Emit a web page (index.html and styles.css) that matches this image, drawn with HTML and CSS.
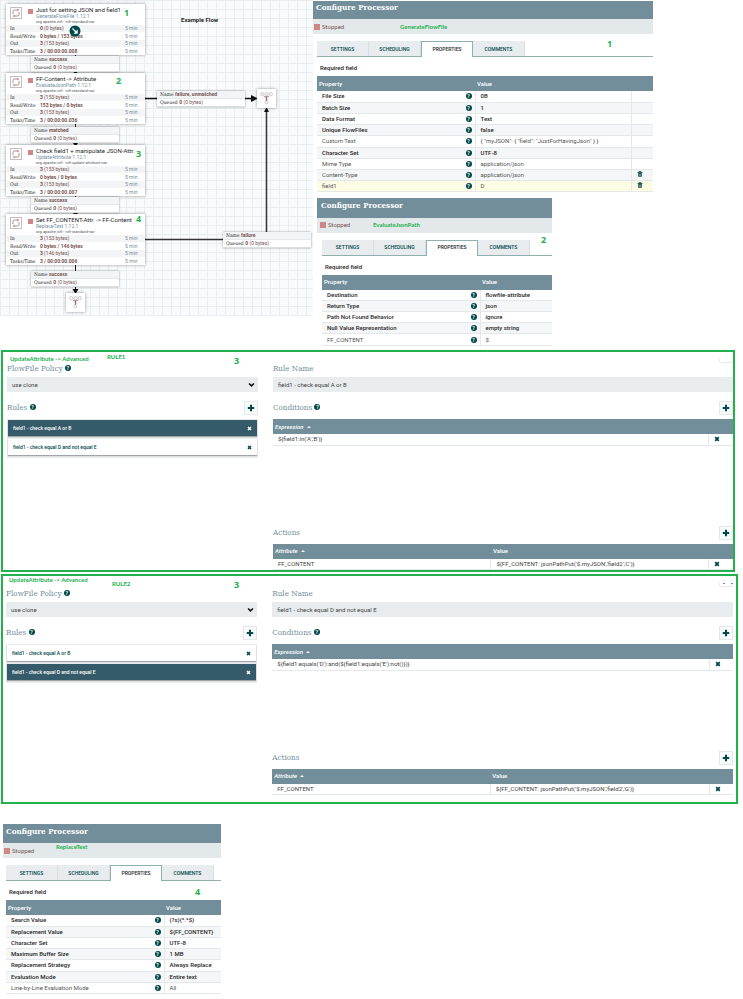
FILE: index.html
```html
<!DOCTYPE html>
<html lang="en">
<head>
  <meta charset="UTF-8">
  <meta name="viewport" content="width=device-width, initial-scale=1.0">
  <title>Example Flow</title>
  <link rel="stylesheet" href="styles.css">
</head>
<body>
  <!-- shared icons -->
  <svg class="defs" width="0" height="0" aria-hidden="true">
    <symbol id="i-plus" viewBox="0 0 10 10"><path d="M5 1v8M1 5h8" stroke="#004849" stroke-width="2.6"/></symbol>
    <symbol id="i-x" viewBox="0 0 10 10"><path d="M2 2l6 6M8 2l-6 6" stroke="currentColor" stroke-width="3"/></symbol>
    <symbol id="i-trash" viewBox="0 0 10 10"><path d="M1 2.5h8M3.5 2V1h3v1" fill="none" stroke="#004849" stroke-width="1.4"/><path d="M2 3h6v6.500H2z" fill="#004849"/><path d="M4 4.500v3.500M6 4.500v3.500" stroke="#fff" stroke-width=".8"/></symbol>
    <symbol id="i-down" viewBox="0 0 10 10"><path d="M1.500 3.500L5 7l3.500-3.500" fill="none" stroke="#111" stroke-width="2.200"/></symbol>
    <symbol id="i-proc" viewBox="0 0 12 12"><rect x=".5" y=".5" width="11" height="11" fill="#fff" stroke="#c9bcbc"/><path d="M3 7V4.500Q3 3 4.500 3H8M9 5v2.500Q9 9 7.500 9H4" fill="none" stroke="#ad8d8d" stroke-width="1"/><path d="M7.500 1.500L9.300 3 7.500 4.500zM4.500 7.500L2.700 9l1.800 1.500z" fill="#ad8d8d"/></symbol>
    <symbol id="i-funnel" viewBox="0 0 20 20"><g fill="none" stroke="#c2b2b2" stroke-width=".8"><circle cx="5.500" cy="5.500" r="1.700"/><circle cx="10" cy="5.500" r="1.700"/><circle cx="14.500" cy="5.500" r="1.700"/><circle cx="10" cy="14" r="1.500"/></g><path d="M7.500 8.200h5M10 8v4.500M9 10.500h2" stroke="#a07272" stroke-width="1.200"/></symbol>
  </svg>

  <div class="top">
    <section class="canvas">
      <svg class="wires" viewBox="0 0 313 316" aria-hidden="true">
        <g stroke="#111" fill="none">
          <path d="M75.500 54v20M75.500 124v22M75.500 196v20M75.500 265v28"/>
          <path d="M145 98.500h107" stroke-width="1.500"/>
          <path d="M145 239.500h121.500V112" stroke="#333" stroke-width="1.500"/>
        </g>
        <path d="M73 71.500h5l-2.500 3zM73 143h5l-2.500 3.500zM73 213h5l-2.500 3zM72.500 289h6l-3 5zM251 95l7 3.500-7 3.500zM264 112l2.500-5 2.500 5z" fill="#111"/>
      </svg>
      <b class="flow-title">Example Flow</b>

      <article class="proc p1">
        <header><svg class="proc-icon"><use href="#i-proc"/></svg><i class="stop"></i>
          <div><h3>Just for setting JSON and field1</h3><p class="type">GenerateFlowFile 1.12.1</p><p>org.apache.nifi - nifi-standard-nar</p></div></header>
        <table>
          <tr><th>In</th><td><b>0</b> (0 bytes)</td><td>5 min</td></tr>
          <tr><th>Read/Write</th><td><b>0 bytes / 153 bytes</b></td><td>5 min</td></tr>
          <tr><th>Out</th><td><b>3</b> (153 bytes)</td><td>5 min</td></tr>
          <tr><th>Tasks/Time</th><td><b>3 / 00:00:00.008</b></td><td>5 min</td></tr>
        </table>
        <svg class="drag" viewBox="0 0 12 12"><circle cx="6" cy="6" r="5.500" fill="#004849"/><path d="M3.500 3.500l4 4" stroke="#fff" stroke-width="1.200"/><path d="M8.700 4.500v4.200H4.500z" fill="#fff"/></svg>
      </article>
      <article class="proc p2">
        <header><svg class="proc-icon"><use href="#i-proc"/></svg><i class="stop"></i>
          <div><h3>FF-Content -&gt; Attribute</h3><p class="type">EvaluateJsonPath 1.12.1</p><p>org.apache.nifi - nifi-standard-nar</p></div></header>
        <table>
          <tr><th>In</th><td><b>3</b> (153 bytes)</td><td>5 min</td></tr>
          <tr><th>Read/Write</th><td><b>153 bytes / 0 bytes</b></td><td>5 min</td></tr>
          <tr><th>Out</th><td><b>3</b> (153 bytes)</td><td>5 min</td></tr>
          <tr><th>Tasks/Time</th><td><b>3 / 00:00:00.036</b></td><td>5 min</td></tr>
        </table>
      </article>
      <article class="proc p3">
        <header><svg class="proc-icon"><use href="#i-proc"/></svg><i class="stop"></i>
          <div><h3>Check field1 + manipulate JSON-Attr.</h3><p class="type">UpdateAttribute 1.12.1</p><p>org.apache.nifi - nifi-update-attribute-nar</p></div></header>
        <table>
          <tr><th>In</th><td><b>3</b> (153 bytes)</td><td>5 min</td></tr>
          <tr><th>Read/Write</th><td><b>0 bytes / 0 bytes</b></td><td>5 min</td></tr>
          <tr><th>Out</th><td><b>3</b> (153 bytes)</td><td>5 min</td></tr>
          <tr><th>Tasks/Time</th><td><b>3 / 00:00:00.007</b></td><td>5 min</td></tr>
        </table>
      </article>
      <article class="proc p4">
        <header><svg class="proc-icon"><use href="#i-proc"/></svg><i class="stop"></i>
          <div><h3>Set FF_CONTENT-Attr. -&gt; FF-Content</h3><p class="type">ReplaceText 1.12.1</p><p>org.apache.nifi - nifi-standard-nar</p></div></header>
        <table>
          <tr><th>In</th><td><b>3</b> (153 bytes)</td><td>5 min</td></tr>
          <tr><th>Read/Write</th><td><b>0 bytes / 146 bytes</b></td><td>5 min</td></tr>
          <tr><th>Out</th><td><b>3</b> (146 bytes)</td><td>5 min</td></tr>
          <tr><th>Tasks/Time</th><td><b>3 / 00:00:00.006</b></td><td>5 min</td></tr>
        </table>
      </article>

      <div class="conn c1"><p>Name <b>success</b></p><p>Queued <b>0</b> <em>(0 bytes)</em></p></div>
      <div class="conn c2"><p>Name <b>matched</b></p><p>Queued <b>0</b> <em>(0 bytes)</em></p></div>
      <div class="conn c3"><p>Name <b>success</b></p><p>Queued <b>0</b> <em>(0 bytes)</em></p></div>
      <div class="conn c4"><p>Name <b>success</b></p><p>Queued <b>0</b> <em>(0 bytes)</em></p></div>
      <div class="conn c5"><p>Name <b>failure, unmatched</b></p><p>Queued <b>0</b> <em>(0 bytes)</em></p></div>
      <div class="conn c6"><p>Name <b>failure</b></p><p>Queued <b>0</b> <em>(0 bytes)</em></p></div>
      <svg class="funnel f1"><use href="#i-funnel"/></svg>
      <svg class="funnel f2"><use href="#i-funnel"/></svg>

      <span class="num n1">1</span>
      <span class="num n2">2</span>
      <span class="num n3">3</span>
      <span class="num n4">4</span>
    </section>

    <div class="dialogs">
      <section class="dialog generate">
        <h2>Configure Processor</h2>
        <div class="status"><i class="stop"></i>Stopped<span class="note">GenerateFlowFile</span></div>
        <div class="dialog-body">
          <nav class="tabs"><button>SETTINGS</button><button>SCHEDULING</button><button class="active">PROPERTIES</button><button>COMMENTS</button></nav>
          <span class="num">1</span>
          <p class="required">Required field</p>
          <table class="props">
            <colgroup><col class="name"><col><col class="tools"></colgroup>
            <thead><tr><th>Property</th><th>Value</th><th></th></tr></thead>
            <tbody>
              <tr class="req"><td>File Size<span class="help">?</span></td><td>0B</td><td></td></tr>
              <tr class="req"><td>Batch Size<span class="help">?</span></td><td>1</td><td></td></tr>
              <tr class="req"><td>Data Format<span class="help">?</span></td><td>Text</td><td></td></tr>
              <tr class="req"><td>Unique FlowFiles<span class="help">?</span></td><td>false</td><td></td></tr>
              <tr><td>Custom Text<span class="help">?</span></td><td>{ "myJSON": { "field": "JustForHavingJson" } }</td><td></td></tr>
              <tr class="req"><td>Character Set<span class="help">?</span></td><td>UTF-8</td><td></td></tr>
              <tr><td>Mime Type<span class="help">?</span></td><td>application/json</td><td></td></tr>
              <tr><td>Content-Type<span class="help">?</span></td><td>application/json</td><td><button class="icon" aria-label="Delete"><svg><use href="#i-trash"/></svg></button></td></tr>
              <tr class="selected"><td>field1<span class="help">?</span></td><td>D</td><td><button class="icon" aria-label="Delete"><svg><use href="#i-trash"/></svg></button></td></tr>
            </tbody>
          </table>
        </div>
      </section>

      <section class="dialog evaluate">
        <h2>Configure Processor</h2>
        <div class="status"><i class="stop"></i>Stopped<span class="note">EvaluateJsonPath</span></div>
        <div class="dialog-body">
          <nav class="tabs"><button>SETTINGS</button><button>SCHEDULING</button><button class="active">PROPERTIES</button><button>COMMENTS</button></nav>
          <span class="num">2</span>
          <p class="required">Required field</p>
          <table class="props">
            <colgroup><col class="name"><col></colgroup>
            <thead><tr><th>Property</th><th>Value</th></tr></thead>
            <tbody>
              <tr class="req"><td>Destination<span class="help">?</span></td><td>flowfile-attribute</td></tr>
              <tr class="req"><td>Return Type<span class="help">?</span></td><td>json</td></tr>
              <tr class="req"><td>Path Not Found Behavior<span class="help">?</span></td><td>ignore</td></tr>
              <tr class="req"><td>Null Value Representation<span class="help">?</span></td><td>empty string</td></tr>
              <tr><td>FF_CONTENT<span class="help">?</span></td><td>$</td></tr>
            </tbody>
          </table>
        </div>
      </section>
    </div>
  </div>

  <section class="advanced rule1">
    <span class="note where">UpdateAttribute -&gt; Advanced</span>
    <span class="note rule">RULE1</span>
    <span class="num">3</span>
    <span class="cut"></span>
    <div class="left">
      <h4><label for="policy1">FlowFile Policy</label> <span class="help">?</span></h4>
      <div class="select"><select id="policy1"><option>use clone</option></select><svg><use href="#i-down"/></svg></div>
      <div class="bar"><h4>Rules <span class="help">?</span></h4><button class="add" aria-label="Add rule"><svg><use href="#i-plus"/></svg></button></div>
      <ul class="rules">
        <li class="active">field1 - check equal A or B<button class="icon" aria-label="Remove"><svg><use href="#i-x"/></svg></button></li>
        <li>field1 - check equal D and not equal E<button class="icon" aria-label="Remove"><svg><use href="#i-x"/></svg></button></li>
      </ul>
    </div>
    <div class="right">
      <h4><label for="name1">Rule Name</label></h4>
      <input id="name1" type="text" value="field1 - check equal A or B">
      <div class="bar"><h4>Conditions <span class="help">?</span></h4><button class="add" aria-label="Add condition"><svg><use href="#i-plus"/></svg></button></div>
      <table class="grid conditions">
        <colgroup><col><col class="remove"></colgroup>
        <thead><tr><th class="sorted">Expression</th><th></th></tr></thead>
        <tbody><tr><td>${field1:in('A','B')}</td><td><button class="icon" aria-label="Remove"><svg><use href="#i-x"/></svg></button></td></tr></tbody>
      </table>
      <div class="bar"><h4>Actions</h4><button class="add" aria-label="Add action"><svg><use href="#i-plus"/></svg></button></div>
      <table class="grid">
        <colgroup><col class="attribute"><col><col class="remove"></colgroup>
        <thead><tr><th class="sorted">Attribute</th><th>Value</th><th></th></tr></thead>
        <tbody><tr><td>FF_CONTENT</td><td>${FF_CONTENT: jsonPathPut('$.myJSON','field2','C')}</td><td><button class="icon" aria-label="Remove"><svg><use href="#i-x"/></svg></button></td></tr></tbody>
      </table>
    </div>
  </section>

  <section class="advanced rule2">
    <span class="note where">UpdateAttribute -&gt; Advanced</span>
    <span class="note rule">RULE2</span>
    <span class="num">3</span>
    <span class="cut"></span>
    <div class="left">
      <h4><label for="policy2">FlowFile Policy</label> <span class="help">?</span></h4>
      <div class="select"><select id="policy2"><option>use clone</option></select><svg><use href="#i-down"/></svg></div>
      <div class="bar"><h4>Rules <span class="help">?</span></h4><button class="add" aria-label="Add rule"><svg><use href="#i-plus"/></svg></button></div>
      <ul class="rules">
        <li>field1 - check equal A or B<button class="icon" aria-label="Remove"><svg><use href="#i-x"/></svg></button></li>
        <li class="active">field1 - check equal D and not equal E<button class="icon" aria-label="Remove"><svg><use href="#i-x"/></svg></button></li>
      </ul>
    </div>
    <div class="right">
      <h4><label for="name2">Rule Name</label></h4>
      <input id="name2" type="text" value="field1 - check equal D and not equal E">
      <div class="bar"><h4>Conditions <span class="help">?</span></h4><button class="add" aria-label="Add condition"><svg><use href="#i-plus"/></svg></button></div>
      <table class="grid conditions">
        <colgroup><col><col class="remove"></colgroup>
        <thead><tr><th class="sorted">Expression</th><th></th></tr></thead>
        <tbody><tr><td>${field1:equals('D'):and(${field1:equals('E'):not()})}</td><td><button class="icon" aria-label="Remove"><svg><use href="#i-x"/></svg></button></td></tr></tbody>
      </table>
      <div class="bar"><h4>Actions</h4><button class="add" aria-label="Add action"><svg><use href="#i-plus"/></svg></button></div>
      <table class="grid">
        <colgroup><col class="attribute"><col><col class="remove"></colgroup>
        <thead><tr><th class="sorted">Attribute</th><th>Value</th><th></th></tr></thead>
        <tbody><tr><td>FF_CONTENT</td><td>${FF_CONTENT: jsonPathPut('$.myJSON','field2','G')}</td><td><button class="icon" aria-label="Remove"><svg><use href="#i-x"/></svg></button></td></tr></tbody>
      </table>
    </div>
  </section>

  <section class="dialog replace">
    <h2>Configure Processor</h2>
    <div class="status"><i class="stop"></i>Stopped<span class="note">ReplaceText</span></div>
    <div class="dialog-body">
      <nav class="tabs"><button>SETTINGS</button><button>SCHEDULING</button><button class="active">PROPERTIES</button><button>COMMENTS</button></nav>
      <span class="num">4</span>
      <p class="required">Required field</p>
      <table class="props">
        <colgroup><col class="name"><col></colgroup>
        <thead><tr><th>Property</th><th>Value</th></tr></thead>
        <tbody>
          <tr class="req"><td>Search Value<span class="help">?</span></td><td>(?s)(^.*$)</td></tr>
          <tr class="req"><td>Replacement Value<span class="help">?</span></td><td>${FF_CONTENT}</td></tr>
          <tr class="req"><td>Character Set<span class="help">?</span></td><td>UTF-8</td></tr>
          <tr class="req"><td>Maximum Buffer Size<span class="help">?</span></td><td>1 MB</td></tr>
          <tr class="req"><td>Replacement Strategy<span class="help">?</span></td><td>Always Replace</td></tr>
          <tr class="req"><td>Evaluation Mode<span class="help">?</span></td><td>Entire text</td></tr>
          <tr><td>Line-by-Line Evaluation Mode<span class="help">?</span></td><td>All</td></tr>
        </tbody>
      </table>
    </div>
  </section>
</body>
</html>
```

FILE: styles.css
```css
* { margin: 0; padding: 0; box-sizing: border-box; }
body { background: #fff; color: #262626; font: 6px/8px Roboto, sans-serif; }
button, input, select { font: inherit; color: inherit; border: 0; border-radius: 0; background: none; }
button { cursor: pointer; }
table { width: 100%; border-collapse: collapse; table-layout: fixed; }
th { text-align: left; }
ul { list-style: none; }
.defs { position: absolute; }

.top { display: grid; grid-template-columns: 313px 1fr; align-items: start; }

/* green annotations */
.note, .num { position: absolute; color: #22b14c; font-family: Lato, sans-serif; font-weight: 700; white-space: nowrap; }
.num { font: 700 9px/12px "Open Sans", sans-serif; }

.stop { display: block; flex: none; width: 6px; height: 6px; background: #d18686; }
.help {
  display: inline-block; width: 6px; height: 6px; border-radius: 50%;
  background: #004849; color: #fff; font: 700 5px/6px Roboto, sans-serif; text-align: center; vertical-align: top;
}
.icon { display: inline-flex; vertical-align: top; color: #004849; }
.icon svg { width: 6px; height: 6px; }

/* flow canvas */
.canvas {
  position: relative; height: 316px; background-color: #f9fafb;
  background-image: linear-gradient(#e9eef0 1px, transparent 1px), linear-gradient(90deg, #e9eef0 1px, transparent 1px);
  background-size: 9px 9px;
}
.wires { position: absolute; left: 0; top: 0; width: 313px; height: 316px; }
.flow-title { position: absolute; left: 181px; top: 16px; }
.proc { position: absolute; left: 6px; width: 139px; background: #fff; box-shadow: 0 0 3px rgba(0,0,0,.4); }
.p1 { top: 4px; }
.p2 { top: 73px; }
.p3 { top: 145px; }
.p4 { top: 214px; }
.proc header { display: flex; height: 21px; padding: 3px 0 0 4px; }
.proc-icon { width: 12px; height: 12px; flex: none; }
.proc .stop { width: 5px; height: 5px; margin: 2px 3px 0 6px; }
.proc h3 { font-size: 6px; line-height: 6px; font-weight: 400; white-space: nowrap; }
.proc p { font-size: 4px; line-height: 5px; color: #555; white-space: nowrap; }
.proc .type { font-size: 5px; line-height: 6px; color: #728e9b; }
.proc tr { height: 7px; }
.proc tr:nth-child(even) { height: 8px; }
.proc tr:nth-child(odd) { background: #f2f4f5; }
.proc th { width: 34px; padding-left: 4px; font: 5px/7px "DejaVu Serif Condensed", "DejaVu Serif", serif; white-space: nowrap; }
.proc td { color: #775351; font-size: 5px; line-height: 7px; white-space: nowrap; }
.proc td:last-child { width: 20px; color: #728e9b; }
.drag { position: absolute; left: 63px; top: 21px; width: 12px; height: 12px; }

.conn { position: absolute; left: 31px; width: 88px; background: #fff; box-shadow: 0 0 2px rgba(0,0,0,.4); border-bottom: 1px solid #dcdfe0; font: 5px/7px "DejaVu Serif Condensed", "DejaVu Serif", serif; }
.conn p { padding-left: 3px; }
.conn p:first-child { background: #f2f4f5; border-bottom: 1px solid #e3e8eb; }
.conn b, .conn em { color: #775351; font-family: Roboto, sans-serif; font-style: normal; }
.c1 { top: 56px; }
.c2 { top: 127px; }
.c3 { top: 197px; }
.c4 { top: 271px; }
.c5 { left: 157px; top: 91px; }
.c6 { left: 223px; top: 232px; }
.funnel { position: absolute; width: 19px; height: 19px; background: #fff; box-shadow: 0 0 3px rgba(0,0,0,.4); }
.f1 { left: 257px; top: 89px; }
.f2 { left: 66px; top: 293px; }
.n1 { left: 124px; top: 7px; }
.n2 { left: 116px; top: 75px; }
.n3 { left: 136px; top: 148px; }
.n4 { left: 136px; top: 213px; }

/* processor dialogs */
.dialog { position: relative; }
.dialog h2 { height: 19px; padding: 1px 3px; background: #728e9b; color: #fff; font: 700 8px/10px "DejaVu Serif Condensed", "DejaVu Serif", serif; }
.status { display: flex; align-items: center; gap: 2px; height: 15px; padding-left: 1px; background: #e3e8eb; color: #775351; }
.dialog-body { position: relative; padding: 7px 0 0 4px; }
.tabs { display: flex; height: 16px; border-bottom: 1px solid #8fb0b0; }
.tabs button { width: 52px; height: 15px; background: #e8ecef; border-right: 1px solid #d8dfe3; color: #004849; font-size: 5px; font-weight: 500; }
.tabs .active { height: 16px; padding-bottom: 2px; background: #fff; border: 1px solid #8fb0b0; border-bottom: 0; color: #262626; }
.required { padding: 7px 0 4px 3px; font-weight: 500; }
.props .name { width: 158px; }
.props .tools { width: 21px; }
.props th { height: 15px; padding-left: 2px; background: #728e9b; color: #fff; font-weight: 500; }
.props td { height: 11px; padding-left: 5px; border-bottom: 1px solid #e3e8eb; border-right: 1px solid #e3e8eb; line-height: 8px; color: #555; white-space: nowrap; }
.props td:last-child { border-right: 0; }
.props tr:nth-child(5) td { height: 12px; }
.props tbody tr:nth-child(even) { background: #f4f6f7; }
.props .req td { color: #262626; font-weight: 500; }
.props tbody .selected { background: #fffce4; }
.props .help { float: right; margin: 1px 3px 0 0; }

.generate { width: 79%; margin-top: 1px; }
.generate h2 { height: 18px; }
.generate .note { left: 87px; }
.generate .num { left: 294px; top: 4px; }
.evaluate { width: 235px; margin: 6px 0 0 4px; }
.evaluate h2 { height: 20px; padding: 2px 4px; }
.evaluate .dialog-body { padding-left: 5px; }
.evaluate .status { padding-left: 3px; }
.evaluate .note { left: 56px; }
.evaluate .num { left: 224px; top: 1px; }
.replace { width: 218px; margin: 20px 0 4px 3px; }
.replace h2 { padding-top: 2px; }
.replace .dialog-body { padding-left: 3px; }
.replace .note { left: 53px; top: 19px; }
.replace .num { left: 192px; top: 28px; }

/* UpdateAttribute advanced view */
.advanced {
  position: relative; display: grid; grid-template-columns: 6fr 11fr; column-gap: 15px;
  margin-left: 1px; padding: 12px 0 0 4px; border: 2px solid #22b14c;
}
.rule1 { margin-top: 4px; margin-right: 8px; }
.rule2 { margin-top: 2px; margin-right: 5px; padding: 13px 3px 7px 3px; }
.where { left: 7px; top: 3px; }
.rule { left: 104px; top: 1px; }
.rule2 .where { left: 6px; top: 0; }
.rule2 .rule { left: 109px; top: 4px; }
.advanced .num { left: 231px; top: 3px; }
.advanced h4 { color: #728e9b; font: 8px/10px "DejaVu Serif Condensed", "DejaVu Serif", serif; }
.advanced .help { margin-top: 1px; }
.select { position: relative; margin-top: 3px; }
.select select { display: block; width: 100%; height: 15px; padding: 0 5px; background: #e8ecef; appearance: none; color: #444; }
.select svg { position: absolute; right: 3px; top: 4px; width: 7px; height: 7px; pointer-events: none; }
.right input { display: block; width: 100%; height: 15px; margin-top: 3px; padding: 0 5px; background: #e8ecef; color: #444; }
.bar { display: flex; justify-content: space-between; align-items: center; margin: 9px 0 4px; }
.add { display: flex; align-items: center; justify-content: center; width: 14px; height: 14px; border: 1px solid #e3e8eb; background: #f9fafb; }
.add svg { width: 8px; height: 8px; }
.rules { display: grid; gap: 3px; padding: 1px 1px 3px; background: #e8ecef; }
.rules li { display: flex; align-items: center; justify-content: space-between; height: 16px; padding: 0 5px; background: #fff; color: #004849; font-size: 5px; font-weight: 500; box-shadow: 0 1px 1px rgba(0,0,0,.3); }
.rules li.active { background: #355b6a; color: #fff; }
.rules .active .icon { color: #fff; }
.rules .icon svg { width: 5px; height: 5px; }
.grid th { height: 15px; padding-left: 2px; background: #728e9b; color: #fff; font-weight: 500; }
.grid .sorted { font-style: italic; }
.sorted::after { content: ""; display: inline-block; margin-left: 3px; border: 2px solid transparent; border-top: 0; border-bottom-color: #fff; vertical-align: 1px; }
.grid td { height: 11px; padding-left: 5px; border-bottom: 1px solid #e3e8eb; border-right: 1px solid #e3e8eb; color: #444; white-space: nowrap; }
.grid td:last-child { border-right: 0; }
.grid .remove { width: 24px; }
.grid .attribute { width: 218px; }
.grid .icon { margin-top: 1px; }
.conditions { margin-bottom: 80px; }
.cut { position: absolute; right: 0; top: 7px; width: 14px; height: 4px; border: 1px solid #e8ecef; border-top: 0; }
.rule2 .cut { right: 3px; }
.rule2 .cut::before { content: ""; display: block; width: 6px; height: 1px; margin: 0 3px; border: solid #728e9b; border-width: 0 2px; }
```
